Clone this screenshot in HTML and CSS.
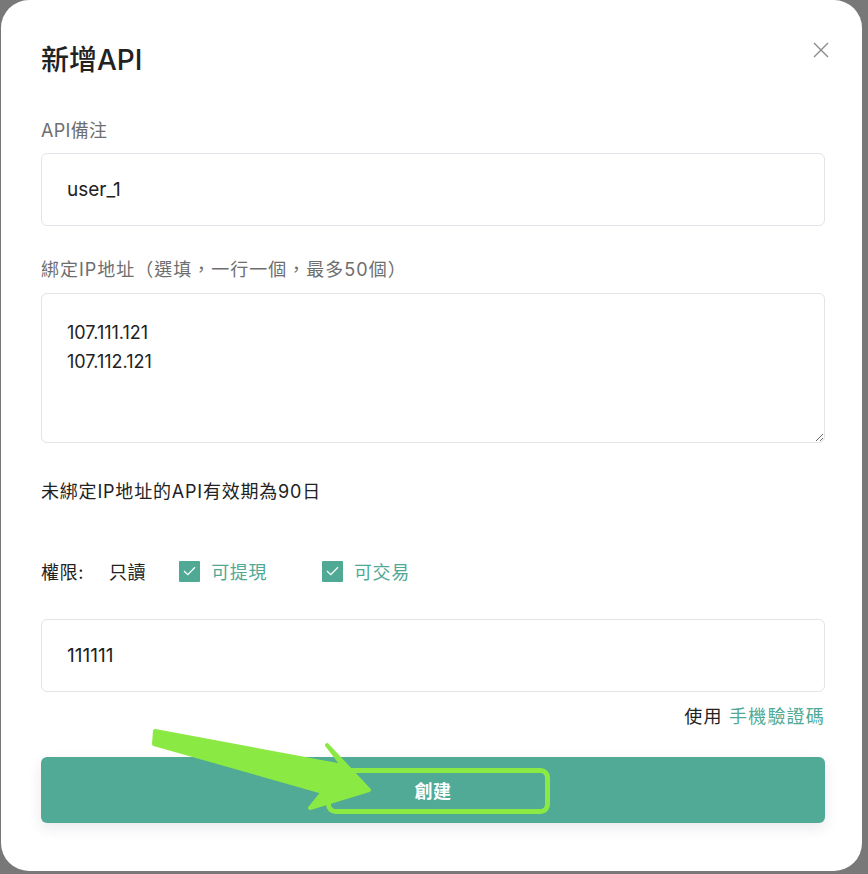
FILE: index.html
```
<!DOCTYPE html>
<html lang="zh-Hant">
<head>
    <meta charset="UTF-8">
    <meta name="viewport" content="width=device-width, initial-scale=1.0">
    <title>新增API</title>
    <link rel="stylesheet" href="styles.css">
</head>
<body>
    <div class="modal">
        <div class="modal-head">
            <h1 class="modal-title">新增API</h1>
            <button class="close-btn" aria-label="關閉">
                <svg width="16" height="16" viewBox="0 0 16 16">
                    <path d="M1 1 L15 15 M15 1 L1 15" stroke="#8a8a8a" stroke-width="1.4" fill="none"/>
                </svg>
            </button>
        </div>

        <label class="field-label">API備注</label>
        <input class="field-input" type="text" value="user_1">

        <label class="field-label label-ip">綁定IP地址（選填，一行一個，最多50個）</label>
        <textarea class="field-area">107.111.121
107.112.121</textarea>

        <p class="note">未綁定IP地址的API有效期為90日</p>

        <div class="perm-row">
            <span class="perm-title">權限:</span>
            <span class="perm-read">只讀</span>
            <span class="perm-item">
                <span class="check">
                    <svg width="13" height="10" viewBox="0 0 13 10">
                        <path d="M1 5 L4.8 8.6 L12 1.2" stroke="#fff" stroke-width="1.3" fill="none"/>
                    </svg>
                </span>
                可提現
            </span>
            <span class="perm-item">
                <span class="check">
                    <svg width="13" height="10" viewBox="0 0 13 10">
                        <path d="M1 5 L4.8 8.6 L12 1.2" stroke="#fff" stroke-width="1.3" fill="none"/>
                    </svg>
                </span>
                可交易
            </span>
        </div>

        <input class="field-input code-input" type="text" value="111111">

        <div class="switch-row">使用 <a class="switch-link">手機驗證碼</a></div>

        <button class="submit-btn">創建</button>
    </div>

    <!-- annotation drawn over the dialog -->
    <svg class="annotation" width="868" height="874" viewBox="0 0 868 874">
        <polygon points="155,731 343,766 327,745 369,790 310,808 323,792 154,744"
                 fill="#8ae942" stroke="#8ae942" stroke-width="4" stroke-linejoin="round"/>
        <rect x="328.5" y="770.5" width="219" height="41" rx="7" fill="none" stroke="#8ae942" stroke-width="5"/>
    </svg>
</body>
</html>
```

FILE: styles.css
```
body {
    margin: 0;
    background: #787878;
    font-family: Inter, "Noto Sans CJK TC", sans-serif;
    color: #222;
    position: relative;
    height: 874px;
    overflow: hidden;
}
.modal {
    box-sizing: border-box;
    width: 861px;
    height: 871px;
    margin-left: 1px;
    background: #fff;
    border-radius: 28px;
    padding: 40px 37px 0 40px;
}
.modal-head {
    display: flex;
    justify-content: space-between;
    align-items: center;
    height: 40px;
    margin: 0 -4px 39px 0;
}
.modal-title {
    margin: 0;
    font-size: 28px;
    font-weight: 500;
    line-height: 40px;
    color: #222;
}
.close-btn {
    border: none;
    background: none;
    padding: 0;
    margin: -20px 0 0 0;
    width: 16px;
    height: 16px;
    cursor: pointer;
}
.field-label {
    display: block;
    font-size: 18px;
    letter-spacing: 0.3px;
    line-height: 24px;
    color: #6e6e6e;
    margin-bottom: 10px;
}
.label-ip {
    margin-top: 32px;
    letter-spacing: 1px;
}
.field-input {
    display: block;
    box-sizing: border-box;
    width: 784px;
    height: 73px;
    border: 1px solid #e3e3ea;
    border-radius: 6px;
    padding: 0 25px;
    font-family: inherit;
    font-size: 19px;
    color: #222;
    outline: none;
}
.field-area {
    display: block;
    box-sizing: border-box;
    width: 784px;
    height: 150px;
    margin-top: 11px;
    border: 1px solid #e3e3ea;
    border-radius: 6px;
    padding: 24px 25px;
    font-family: inherit;
    font-size: 18px;
    line-height: 29px;
    color: #222;
    outline: none;
    resize: vertical;
}
.note {
    margin: 37px 0 0 0;
    font-size: 18px;
    letter-spacing: 0.8px;
    line-height: 24px;
}
.perm-row {
    display: flex;
    align-items: center;
    margin-top: 55px;
    height: 24px;
    font-size: 18px;
    letter-spacing: 0.6px;
}
.perm-read {
    margin-left: 25px;
}
.perm-item {
    display: flex;
    align-items: center;
    gap: 11px;
    color: #4fa995;
    margin-left: 33px;
}
.perm-item + .perm-item {
    margin-left: 55px;
}
.check {
    display: flex;
    align-items: center;
    justify-content: center;
    width: 21px;
    height: 21px;
    background: #4fa995;
    border-radius: 1px;
}
.code-input {
    margin-top: 36px;
}
.switch-row {
    margin-top: 13px;
    text-align: right;
    font-size: 18px;
    letter-spacing: 1.2px;
    line-height: 24px;
}
.switch-link {
    color: #4fa995;
    cursor: pointer;
}
.submit-btn {
    display: block;
    width: 784px;
    height: 66px;
    margin-top: 28px;
    border: none;
    border-radius: 6px;
    background: #50aa96;
    color: #fff;
    font-family: inherit;
    font-size: 18px;
    font-weight: 600;
    letter-spacing: 0.5px;
    box-shadow: 0 5px 14px rgba(40, 40, 80, 0.1);
    cursor: pointer;
}
.annotation {
    position: absolute;
    left: 0;
    top: 0;
    pointer-events: none;
}
```
